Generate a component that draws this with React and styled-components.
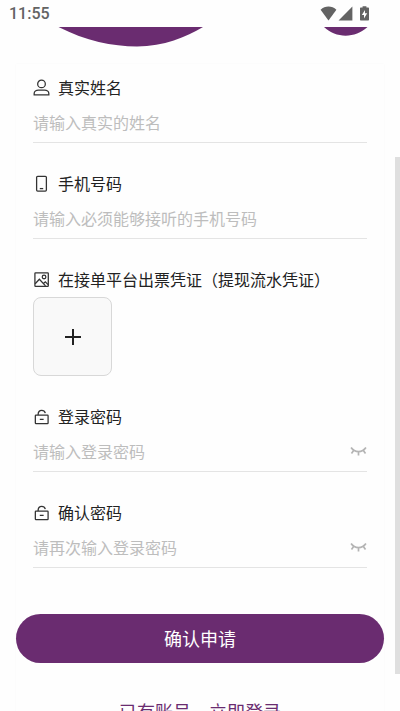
import React, { useState } from "react";
import styled, { createGlobalStyle } from "styled-components";

const PURPLE = "#6a2c70";

const UserIcon = () => (
  <Icon viewBox="0 0 16 16">
    <circle cx="8" cy="4.6" r="3.6" />
    <path d="M1.1 15v-1.4c0-1.9 1.9-3.2 4-3.2h5.8c2.1 0 4 1.3 4 3.2V15z" />
  </Icon>
);

const PhoneIcon = () => (
  <Icon viewBox="0 0 16 16">
    <rect x="3.4" y="1.2" width="9.2" height="14" rx="1" />
    <path d="M6.4 12.8h3.2" />
  </Icon>
);

const PhotoIcon = () => (
  <Icon viewBox="0 0 16 16">
    <rect x="1.8" y="1.8" width="12.6" height="12.6" rx="0.6" />
    <circle cx="10.4" cy="5.6" r="1.7" />
    <path d="M2 12l4-4.200 5.800 6.200M9.800 11.800l1.800-1.600 2.600 2.600" />
  </Icon>
);

const LockIcon = () => (
  <Icon viewBox="0 0 16 16">
    <rect x="2.2" y="6.6" width="12" height="8.2" rx="0.6" />
    <path d="M4.800 6.500c0-2.600 1.200-4.200 3.400-4.200 1.700 0 2.900.9 3.400 2.500M6.400 10.700h3.600" />
  </Icon>
);

const ClosedEyeIcon = () => (
  <EyeSvg viewBox="0 0 16 16">
    <path d="M1 5.200C2.800 7.800 5 9 8 9s5.200-1.200 7-3.800M3.600 7.800L1.400 10.800M8 9v3.800M12.400 7.800l2.200 3" />
  </EyeSvg>
);

const StatusIcons = () => (
  <StatusSvg viewBox="0 0 50 16">
    <path d="M8.500 14.400L.6 3.800C2.800 1.600 5.600.6 8.500.6s5.700 1 7.900 3.200z" />
    <path d="M32.400.6v13.800H18.600z" />
    <path d="M42.600.2h3.800v1.400h1.600c.6 0 1 .4 1 1v11c0 .6-.4 1-1 1h-7c-.6 0-1-.4-1-1v-11c0-.6.4-1 1-1h1.600z" />
    <path fill="#fff" d="M45 4v3.200h2.200L44 12.400V9h-2.200z" />
  </StatusSvg>
);

const Field = ({ id, icon, label, placeholder, password }) => {
  const [value, setValue] = useState("");
  const [visible, setVisible] = useState(false);

  return (
    <FieldBox>
      <Label htmlFor={id}>
        {icon}
        {label}
      </Label>
      <InputWrapper>
        <Input
          id={id}
          type={password && !visible ? "password" : "text"}
          placeholder={placeholder}
          value={value}
          onChange={(event) => setValue(event.target.value)}
        />
        {password && (
          <EyeButton
            type="button"
            aria-label="显示密码"
            onClick={() => setVisible(!visible)}
          >
            <ClosedEyeIcon />
          </EyeButton>
        )}
      </InputWrapper>
    </FieldBox>
  );
};

export default function App() {
  return (
    <>
      <GlobalStyle />
      <Screen>
        <StatusBar>
          <span>11:55</span>
          <StatusIcons />
        </StatusBar>
        <Content>
          <Hero>
            <svg width="400" height="20" viewBox="0 0 400 20">
              <path d="M58.500 0C86 14 112 19.400 137 19.400C164 19.400 186 10 203 0z" />
              <path d="M324 0C336 11.500 355 11.500 367.500 0z" />
            </svg>
          </Hero>
          <Form onSubmit={(event) => event.preventDefault()}>
            <Card>
              <Field
                id="name"
                icon={<UserIcon />}
                label="真实姓名"
                placeholder="请输入真实的姓名"
              />
              <Field
                id="phone"
                icon={<PhoneIcon />}
                label="手机号码"
                placeholder="请输入必须能够接听的手机号码"
              />
              <FieldBox>
                <Label htmlFor="proof">
                  <PhotoIcon />
                  在接单平台出票凭证（提现流水凭证）
                </Label>
                <UploadButton id="proof" type="button">
                  <svg width="18" height="18" viewBox="0 0 18 18">
                    <path d="M9 1v16M1 9h16" />
                  </svg>
                </UploadButton>
              </FieldBox>
              <Field
                id="password"
                icon={<LockIcon />}
                label="登录密码"
                placeholder="请输入登录密码"
                password
              />
              <Field
                id="confirm"
                icon={<LockIcon />}
                label="确认密码"
                placeholder="请再次输入登录密码"
                password
              />
            </Card>
            <SubmitButton type="submit">确认申请</SubmitButton>
            <LoginLink href="#login">已有账号，立即登录</LoginLink>
          </Form>
          <ScrollThumb />
        </Content>
      </Screen>
    </>
  );
}

const GlobalStyle = createGlobalStyle`
  * {
    box-sizing: border-box;
  }

  body {
    margin: 0;
    background: #fefefe;
  }

  body, input, button {
    font-family: "Noto Sans CJK SC", sans-serif;
  }
`;

const Screen = styled.div`
  display: flex;
  flex-direction: column;
  height: 100vh;
  overflow: hidden;
`;

const StatusBar = styled.div`
  display: flex;
  flex: none;
  align-items: center;
  justify-content: space-between;
  height: 27px;
  padding: 0 30px 0 9px;
  color: #636363;
  font-family: Roboto, sans-serif;
  font-size: 16px;
  font-weight: 500;
`;

const StatusSvg = styled.svg`
  width: 50px;
  height: 16px;
  fill: #636363;
`;

const Content = styled.main`
  position: relative;
  flex: 1;
  min-height: 0;
  overflow: hidden;
`;

const Hero = styled.div`
  height: 37px;

  svg {
    display: block;
    fill: ${PURPLE};
  }
`;

const Form = styled.form`
  display: flex;
  flex-direction: column;
  margin: 0 16px;
  box-shadow: 0 0 2px rgba(0, 0, 0, 0.03);
`;

const Card = styled.div`
  display: flex;
  flex-direction: column;
  gap: 28px;
  padding: 11px 17px 46px;
`;

const FieldBox = styled.div`
  display: flex;
  flex-direction: column;
  gap: 4px;
`;

const Label = styled.label`
  display: flex;
  align-items: center;
  gap: 8px;
  color: #222;
  font-size: 16px;
  line-height: 24px;
  white-space: nowrap;
`;

const Icon = styled.svg`
  flex: none;
  width: 17px;
  height: 17px;
  fill: none;
  stroke: #333;
  stroke-width: 1.2;
`;

const InputWrapper = styled.div`
  display: flex;
  align-items: center;
  height: 40px;
  padding-bottom: 2px;
  border-bottom: 1px solid #e4e4e4;
`;

const Input = styled.input`
  flex: 1;
  min-width: 0;
  height: 100%;
  padding: 0;
  border: none;
  outline: none;
  background: none;
  color: #222;
  font-size: 16px;

  &::placeholder {
    color: #bdbdbd;
  }
`;

const EyeButton = styled.button`
  display: flex;
  padding: 0;
  border: none;
  background: none;
`;

const EyeSvg = styled.svg`
  width: 17px;
  height: 17px;
  fill: none;
  stroke: #b4b4b4;
  stroke-width: 1.6;
`;

const UploadButton = styled.button`
  display: flex;
  align-items: center;
  justify-content: center;
  width: 79px;
  height: 79px;
  margin-top: 2px;
  padding: 0;
  border: 1px solid #d8d8d8;
  border-radius: 8px;
  background: #f9f9f9;

  svg {
    fill: none;
    stroke: #222;
    stroke-width: 2;
  }
`;

const SubmitButton = styled.button`
  height: 49px;
  padding: 0 0 2px;
  border: none;
  border-radius: 25px;
  background: ${PURPLE};
  color: #fff;
  font-size: 18px;
`;

const LoginLink = styled.a`
  margin-top: 34px;
  color: ${PURPLE};
  font-size: 18px;
  line-height: 28px;
  text-align: center;
  text-decoration: none;
`;

/* scroll indicator lying over the right edge of the content */
const ScrollThumb = styled.div`
  position: absolute;
  top: 130px;
  right: 0;
  bottom: 37px;
  width: 5px;
  background: #dfdfdf;
`;
